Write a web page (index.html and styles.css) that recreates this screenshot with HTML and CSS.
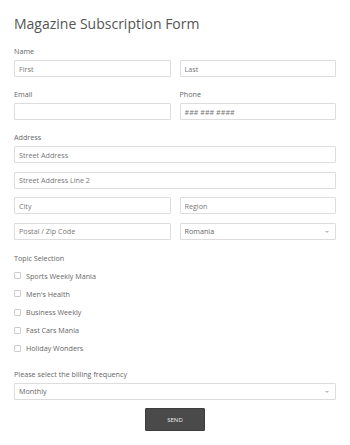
FILE: index.html
```html
<!DOCTYPE html>
<html lang="en">

<head>
    <meta charset="UTF-8">
    <meta name="viewport" content="width=device-width, initial-scale=1.0">
    <title>Magazine Subscription Form</title>
    <link rel="stylesheet" href="styles.css">
</head>

<body>
    <form class="sub-form">
        <h1 class="form-title">Magazine Subscription Form</h1>

        <div class="field-group">
            <label class="field-label">Name</label>
            <div class="two-col">
                <input type="text" class="text-input" placeholder="First">
                <input type="text" class="text-input" placeholder="Last">
            </div>
        </div>

        <div class="field-group">
            <div class="two-col">
                <div>
                    <label class="field-label">Email</label>
                    <input type="email" class="text-input">
                </div>
                <div>
                    <label class="field-label">Phone</label>
                    <input type="tel" class="text-input" placeholder="### ### ####">
                </div>
            </div>
        </div>

        <div class="field-group">
            <label class="field-label">Address</label>
            <div class="address-rows">
                <input type="text" class="text-input" placeholder="Street Address">
                <input type="text" class="text-input" placeholder="Street Address Line 2">
                <div class="two-col">
                    <input type="text" class="text-input" placeholder="City">
                    <input type="text" class="text-input" placeholder="Region">
                </div>
                <div class="two-col">
                    <input type="text" class="text-input" placeholder="Postal / Zip Code">
                    <div class="select-box">Romania</div>
                </div>
            </div>
        </div>

        <div class="field-group topics">
            <label class="field-label">Topic Selection</label>
            <div class="check-list">
                <label class="check-row"><span class="check-box"></span>Sports Weekly Mania</label>
                <label class="check-row"><span class="check-box"></span>Men's Health</label>
                <label class="check-row"><span class="check-box"></span>Business Weekly</label>
                <label class="check-row"><span class="check-box"></span>Fast Cars Mania</label>
                <label class="check-row"><span class="check-box"></span>Holiday Wonders</label>
            </div>
        </div>

        <div class="field-group">
            <label class="field-label">Please select the billing frequency</label>
            <div class="select-box">Monthly</div>
        </div>

        <div class="actions">
            <button type="button" class="send-button">SEND</button>
        </div>
    </form>
</body>

</html>
```

FILE: styles.css
```css
body {
    margin: 0;
    font-family: "Open Sans", Arial, sans-serif;
    color: #666;
    background: #fff;
}

.sub-form {
    width: 322px;
    padding: 12px 14px;
}

.form-title {
    margin: 0 0 10px;
    font-size: 14px;
    line-height: 24px;
    font-weight: 400;
    color: #555;
}

.field-group {
    margin-bottom: 12px;
}

.field-label {
    display: block;
    font-size: 7.2px;
    line-height: 10px;
    margin-bottom: 4px;
    color: #666;
}

.topics {
    margin-top: 13px;
}

.two-col {
    display: grid;
    grid-template-columns: 1fr 1fr;
    gap: 9px;
}

.address-rows {
    display: flex;
    flex-direction: column;
    gap: 8.6px;
}

.text-input,
.select-box {
    display: block;
    box-sizing: border-box;
    width: 100%;
    height: 17px;
    margin: 0;
    padding: 0 4px;
    border: 1px solid #ddd;
    border-radius: 1px;
    background: #fff;
    font-family: "Open Sans", Arial, sans-serif;
    font-size: 7.2px;
    line-height: 15px;
    color: #666;
}

.text-input::placeholder {
    color: #777;
}

.select-box {
    position: relative;
}

.select-box::after {
    content: "";
    position: absolute;
    right: 6px;
    top: 7px;
    border-left: 2px solid transparent;
    border-right: 2px solid transparent;
    border-top: 2px solid #bbb;
}

.check-row {
    display: flex;
    align-items: center;
    height: 18.1px;
    font-size: 7.2px;
    color: #666;
}

.check-box {
    width: 7px;
    height: 7px;
    box-sizing: border-box;
    border: 1px solid #ccc;
    border-radius: 1px;
    margin-right: 5px;
}

.actions {
    display: flex;
    justify-content: center;
    margin-top: -4px;
}

.send-button {
    width: 60px;
    height: 23px;
    background: #4a4a4a;
    color: #eee;
    border: 1px solid #3d3d3d;
    border-radius: 1px;
    font-family: "Open Sans", Arial, sans-serif;
    font-size: 6px;
    cursor: pointer;
}
```
